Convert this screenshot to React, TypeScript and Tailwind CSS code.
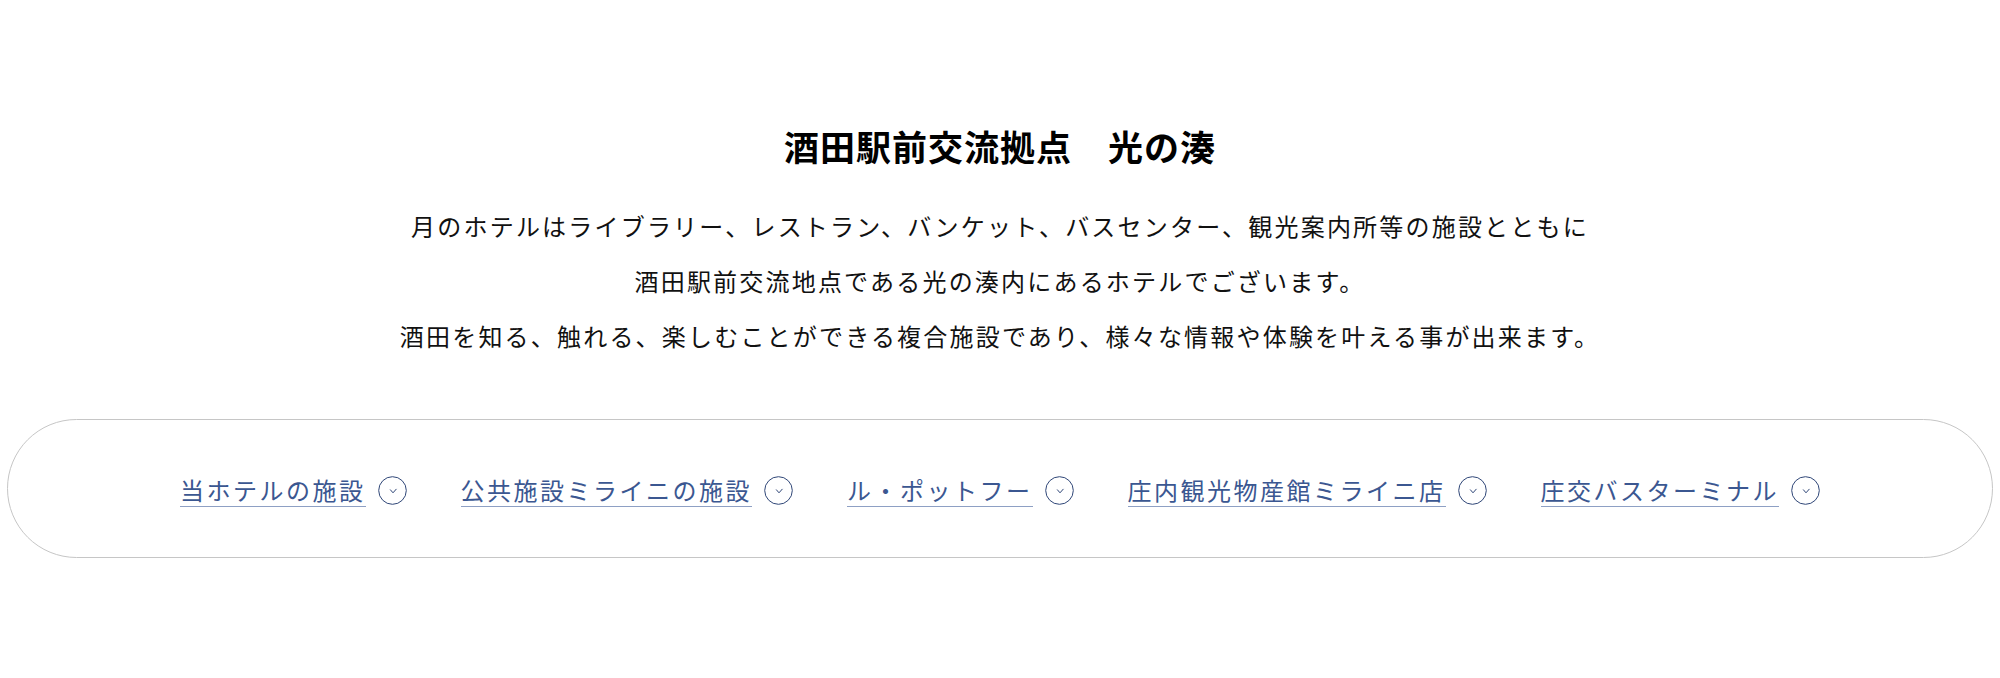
import React from 'react';

const links = ['当ホテルの施設', '公共施設ミライニの施設', 'ル・ポットフー', '庄内観光物産館ミライニ店', '庄交バスターミナル'];

function CircleDown() {
  return (
    <svg width="29" height="29" viewBox="0 0 29 29" className="shrink-0">
      <circle cx="14.5" cy="14.5" r="13.8" fill="none" stroke="#2f4677" strokeWidth="1" />
      <path d="M12.4 13.8 L15 16.8 L18.2 13.2" fill="none" stroke="#2f4677" strokeWidth="1" strokeLinecap="round" strokeLinejoin="round" />
    </svg>
  );
}

export default function App() {
  return (
    <div className="w-full h-[678px] bg-white overflow-hidden" style={{ fontFamily: '"Noto Sans CJK JP", "Noto Sans", sans-serif' }}>
      <div className="pt-[120px] flex flex-col items-center">
        <h1 className="text-[35px] leading-[52px] font-bold tracking-[1px] text-black">酒田駅前交流拠点　光の湊</h1>
        <div className="mt-[26px] text-center text-[24px] leading-[55px] tracking-[2.2px] text-[#111]">
          <p>月のホテルはライブラリー、レストラン、バンケット、バスセンター、観光案内所等の施設とともに</p>
          <p>酒田駅前交流地点である光の湊内にあるホテルでございます。</p>
          <p>酒田を知る、触れる、楽しむことができる複合施設であり、様々な情報や体験を叶える事が出来ます。</p>
        </div>
      </div>

      <nav className="mx-[7px] mt-[56px] h-[139px] rounded-full border border-[#c6c6c6] flex items-center justify-center gap-[54px] pt-[4px]">
        {links.map(l => (
          <a key={l} href="#" className="flex items-center gap-[12px] text-[#3b5791]">
            <span className="text-[24px] leading-[32px] tracking-[2.5px] border-b border-[#8ea0c4]">{l}</span>
            <CircleDown />
          </a>
        ))}
      </nav>
    </div>
  );
}
